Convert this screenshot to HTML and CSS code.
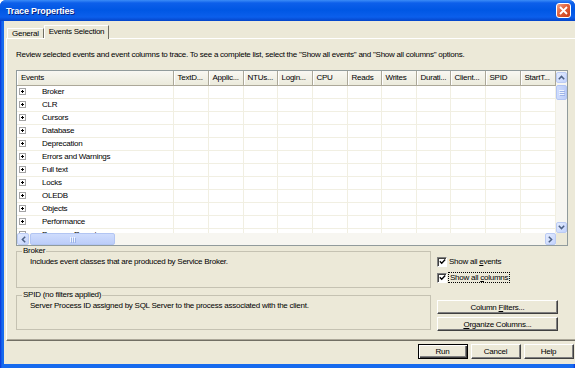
FILE: index.html
```html
<!DOCTYPE html>
<html lang="en">
<head>
<meta charset="utf-8">
<title>Trace Properties</title>
<link rel="stylesheet" href="styles.css">
</head>
<body>

<div class="window">
  <div class="titlebar">
    <span class="title">Trace Properties</span>
    <span class="close">
      <svg width="9" height="9" viewBox="0 0 9 9"><path d="M1 1L8 8M8 1L1 8" stroke="#fff" stroke-width="1.8"/></svg>
    </span>
  </div>

  <div class="frame">
    <div class="client">
      <div class="tabs">
        <div class="tab">General</div>
        <div class="tab active">Events Selection</div>
      </div>

      <div class="panel">
        <p class="intro">Review selected events and event columns to trace. To see a complete list, select the "Show all events" and "Show all columns" options.</p>

        <div class="grid">
          <div class="grid-top">
            <div class="grid-body">
              <table class="events">
                <colgroup>
                  <col class="w-ev"><col class="w35"><col class="w35"><col class="w34"><col class="w35"><col class="w35"><col class="w34"><col class="w35"><col class="w34"><col class="w35"><col class="w35"><col class="w35">
                </colgroup>
                <tr>
                  <th>Events</th><th>TextD...</th><th>Applic...</th><th>NTUs...</th><th>Login...</th><th>CPU</th><th>Reads</th><th>Writes</th><th>Durati...</th><th>Client...</th><th>SPID</th><th>StartT...</th>
                </tr>
                <tr><td class="ev"><span class="exp"></span>Broker</td><td></td><td></td><td></td><td></td><td></td><td></td><td></td><td></td><td></td><td></td><td></td></tr>
                <tr><td class="ev"><span class="exp"></span>CLR</td><td></td><td></td><td></td><td></td><td></td><td></td><td></td><td></td><td></td><td></td><td></td></tr>
                <tr><td class="ev"><span class="exp"></span>Cursors</td><td></td><td></td><td></td><td></td><td></td><td></td><td></td><td></td><td></td><td></td><td></td></tr>
                <tr><td class="ev"><span class="exp"></span>Database</td><td></td><td></td><td></td><td></td><td></td><td></td><td></td><td></td><td></td><td></td><td></td></tr>
                <tr><td class="ev"><span class="exp"></span>Deprecation</td><td></td><td></td><td></td><td></td><td></td><td></td><td></td><td></td><td></td><td></td><td></td></tr>
                <tr><td class="ev"><span class="exp"></span>Errors and Warnings</td><td></td><td></td><td></td><td></td><td></td><td></td><td></td><td></td><td></td><td></td><td></td></tr>
                <tr><td class="ev"><span class="exp"></span>Full text</td><td></td><td></td><td></td><td></td><td></td><td></td><td></td><td></td><td></td><td></td><td></td></tr>
                <tr><td class="ev"><span class="exp"></span>Locks</td><td></td><td></td><td></td><td></td><td></td><td></td><td></td><td></td><td></td><td></td><td></td></tr>
                <tr><td class="ev"><span class="exp"></span>OLEDB</td><td></td><td></td><td></td><td></td><td></td><td></td><td></td><td></td><td></td><td></td><td></td></tr>
                <tr><td class="ev"><span class="exp"></span>Objects</td><td></td><td></td><td></td><td></td><td></td><td></td><td></td><td></td><td></td><td></td><td></td></tr>
                <tr><td class="ev"><span class="exp"></span>Performance</td><td></td><td></td><td></td><td></td><td></td><td></td><td></td><td></td><td></td><td></td><td></td></tr>
                <tr><td class="ev"><span class="exp"></span>Progress Report</td><td></td><td></td><td></td><td></td><td></td><td></td><td></td><td></td><td></td><td></td><td></td></tr>
              </table>
            </div>
            <div class="vscroll">
              <span class="sb-btn">
                <svg width="7" height="5" viewBox="0 0 7 5"><polyline points="0.8,4.2 3.5,1.4 6.2,4.2" fill="none" stroke="#4D6185" stroke-width="1.5"/></svg>
              </span>
              <span class="thumb v"><i></i><i></i><i></i></span>
              <span class="track"></span>
              <span class="sb-btn">
                <svg width="7" height="5" viewBox="0 0 7 5"><polyline points="0.8,0.8 3.5,3.6 6.2,0.8" fill="none" stroke="#4D6185" stroke-width="1.5"/></svg>
              </span>
            </div>
          </div>
          <div class="grid-bottom">
            <div class="hscroll">
              <span class="sb-btn wide">
                <svg width="5" height="7" viewBox="0 0 5 7"><polyline points="4.2,0.8 1.4,3.5 4.2,6.2" fill="none" stroke="#4D6185" stroke-width="1.5"/></svg>
              </span>
              <span class="thumb h"><i></i><i></i><i></i></span>
              <span class="track"></span>
              <span class="sb-btn">
                <svg width="5" height="7" viewBox="0 0 5 7"><polyline points="0.8,0.8 3.6,3.5 0.8,6.2" fill="none" stroke="#4D6185" stroke-width="1.5"/></svg>
              </span>
            </div>
            <div class="corner"></div>
          </div>
        </div>

        <div class="lower">
          <div class="groups">
            <fieldset class="group first">
              <legend>Broker</legend>
              <p>Includes event classes that are produced by Service Broker.</p>
            </fieldset>
            <fieldset class="group second">
              <legend>SPID (no filters applied)</legend>
              <p>Server Process ID assigned by SQL Server to the process associated with the client.</p>
            </fieldset>
          </div>

          <div class="side">
            <label class="check">
              <span class="box"><svg width="7" height="7" viewBox="0 0 7 7"><polyline points="0.8,3.3 2.7,5.2 6.2,1.5" fill="none" stroke="#000" stroke-width="1.3"/></svg></span>
              <span>Show all <u>e</u>vents</span>
            </label>
            <label class="check">
              <span class="box"><svg width="7" height="7" viewBox="0 0 7 7"><polyline points="0.8,3.3 2.7,5.2 6.2,1.5" fill="none" stroke="#000" stroke-width="1.3"/></svg></span>
              <span class="focus">Show all <u>c</u>olumns</span>
            </label>
            <button class="btn side-btn first-btn">Column <u>F</u>ilters...</button>
            <button class="btn side-btn"><u>O</u>rganize Columns...</button>
          </div>
        </div>
      </div>

      <div class="actions">
        <button class="btn default">Run</button>
        <button class="btn">Cancel</button>
        <button class="btn">Help</button>
      </div>
    </div>
  </div>
</div>

</body>
</html>
```

FILE: styles.css
```css
* { box-sizing: border-box; }
body {
  margin: 0;
  background: #fff;
  font-family: "Liberation Sans", Arial, sans-serif;
  font-size: 8px;
  letter-spacing: -0.25px;
  color: #000;
}
.window {
  width: 575px;
  height: 368px;
  display: flex;
  flex-direction: column;
  border-radius: 6px 6px 0 0;
  overflow: hidden;
  background: #0B4ED8;
}
.titlebar {
  height: 21px;
  flex: none;
  display: flex;
  align-items: center;
  justify-content: space-between;
  padding: 0 4px 0 6px;
  background: linear-gradient(#3B8CF7 0, #0D5FEA 3px, #0057E4 10px, #0B5FEC 17px, #0444C9 21px);
}
.title {
  color: #fff;
  font-weight: bold;
  font-size: 9px;
  letter-spacing: -0.15px;
  text-shadow: 1px 1px #0A1E7A;
}
.close {
  width: 15px;
  height: 15px;
  border: 1px solid #fff;
  border-radius: 3px;
  background: linear-gradient(135deg, #F0A48C, #E0603A 45%, #C83C17);
  display: flex;
  align-items: center;
  justify-content: center;
}
.frame {
  flex: 1;
  display: flex;
  padding: 0 4px 4px;
  background: linear-gradient(to right, #0831D9, #166AEE 2px, #166AEE calc(100% - 2px), #0831D9);
}
.client {
  flex: 1;
  display: flex;
  flex-direction: column;
  padding: 4px 3px 0 2px;
  background: #ECE9D8;
}

/* tabs */
.tabs {
  height: 13px;
  display: flex;
  align-items: flex-end;
  padding-left: 1px;
}
.tab {
  height: 10px;
  line-height: 9px;
  padding: 0 4px;
  border: 1px solid;
  border-color: #FFFFFF #716F64 transparent #FFFFFF;
  border-bottom: none;
  background: #ECE9D8;
}
.tab.active {
  height: 14px;
  line-height: 12px;
  margin-bottom: -1px;
  position: relative;
  z-index: 1;
}
.panel {
  height: 303px;
  padding: 0 8px 0 9px;
  border: 1px solid;
  border-color: #FFFFFF #716F64 #716F64 #FFFFFF;
  box-shadow: inset -1px -1px #ACA899;
  background: #ECE9D8;
}
.intro {
  margin: 11px 0 0;
  line-height: 10px;
  white-space: nowrap;
}

/* events grid */
.grid {
  margin-top: 10px;
  height: 176px;
  border: 1px solid #919B9C;
  background: #fff;
  display: flex;
  flex-direction: column;
}
.grid-top {
  height: 162px;
  display: flex;
}
.grid-body {
  flex: 1;
  overflow: hidden;
}
.events {
  width: 538px;
  table-layout: fixed;
  border-collapse: collapse;
}
.w-ev { width: 156px; }
.w35 { width: 35px; }
.w34 { width: 34px; }
.events th {
  height: 14px;
  padding: 0 0 0 4px;
  text-align: left;
  font-weight: normal;
  white-space: nowrap;
  overflow: hidden;
  background: linear-gradient(#F8F7F2, #EBEADB);
  border-right: 1px solid #ACA899;
  border-bottom: 1px solid #ACA899;
  box-shadow: inset 1px 0 #fff;
}
.events td {
  height: 13px;
  padding: 0;
  border-right: 1px solid #F1EFE2;
  border-bottom: 1px solid #F1EFE2;
  white-space: nowrap;
}
.events td.ev {
  padding-left: 2px;
}
.exp {
  display: inline-block;
  width: 7px;
  height: 7px;
  margin-right: 16px;
  vertical-align: -1px;
  border: 1px solid #A4A4A4;
  background:
    linear-gradient(#000, #000) center / 3px 1px no-repeat,
    linear-gradient(#000, #000) center / 1px 3px no-repeat,
    #fff;
}

/* scrollbars */
.vscroll {
  width: 11px;
  display: flex;
  flex-direction: column;
  background: #F7F6F1;
  padding-top: 1px;
}
.hscroll {
  flex: 1;
  display: flex;
  background: #F7F6F1;
}
.grid-bottom {
  height: 12px;
  display: flex;
}
.corner {
  width: 11px;
  background: #ECE9D8;
}
.sb-btn {
  flex: none;
  width: 11px;
  height: 11px;
  display: flex;
  align-items: center;
  justify-content: center;
  border: 1px solid #BBCBF4;
  border-radius: 2px;
  background: linear-gradient(135deg, #E4ECFE, #C3D3FD);
}
.sb-btn.wide { width: 12px; }
.hscroll .sb-btn { height: 12px; }
.track { flex: 1; }
.thumb {
  flex: none;
  display: flex;
  align-items: center;
  justify-content: center;
  gap: 1px;
  border: 1px solid #B2C5F3;
  border-radius: 2px;
  background: linear-gradient(to right, #CFDCFD, #BCCDF9);
}
.thumb.v {
  height: 15px;
  margin-top: 2px;
  flex-direction: column;
}
.thumb.h {
  width: 85px;
  margin-left: 1px;
  background: linear-gradient(#CFDCFD, #BCCDF9);
}
.thumb i {
  display: block;
  background: #EEF4FE;
  box-shadow: 1px 1px #9EB4E8;
}
.thumb.v i { width: 5px; height: 1px; }
.thumb.h i { width: 1px; height: 5px; }

/* group boxes and options */
.lower {
  display: flex;
}
.groups {
  width: 415px;
  display: flex;
  flex-direction: column;
  gap: 2px;
}
.group {
  margin: 0;
  padding: 0 0 0 5px;
  min-width: 0;
  border: 1px solid #C5C2B2;
}
.group.first { height: 42px; }
.group.second { height: 40px; }
.group legend {
  padding: 0 1px;
  line-height: 10px;
}
.group p {
  margin: 1px 0 0 8px;
  line-height: 10px;
}
.side {
  width: 121px;
  margin-left: 6px;
  padding-top: 10px;
  display: flex;
  flex-direction: column;
}
.check {
  height: 11px;
  display: flex;
  align-items: center;
  gap: 2px;
  margin-bottom: 5px;
}
.box {
  width: 10px;
  height: 10px;
  display: flex;
  align-items: center;
  justify-content: center;
  border: 1px solid;
  border-color: #808080 #fff #fff #808080;
  box-shadow: inset 1px 1px #404040;
  background: #fff;
}
.focus {
  outline: 1px dotted #000;
  padding: 0 1px;
}
.btn {
  height: 15px;
  padding: 0;
  font: inherit;
  letter-spacing: inherit;
  color: #000;
  background: #ECE9D8;
  border: 1px solid;
  border-color: #fff #404040 #404040 #fff;
  box-shadow: inset -1px -1px #808080;
}
.side-btn {
  height: 14px;
  margin-bottom: 3px;
}
.first-btn { margin-top: 12px; }
.btn.default {
  border-color: #000;
  box-shadow: inset 1px 1px #fff, inset -1px -1px #404040, inset -2px -2px #808080;
}
.actions {
  display: flex;
  justify-content: flex-end;
  gap: 3px;
  margin-top: 3px;
  padding-right: 3px;
}
.actions .btn { width: 50px; }
```
